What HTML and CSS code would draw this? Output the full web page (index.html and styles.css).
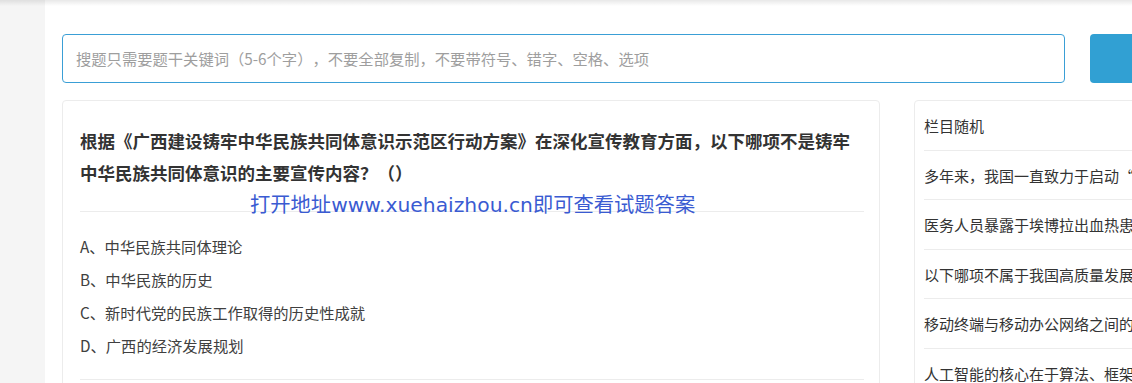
FILE: index.html
```html
<!DOCTYPE html>
<html lang="zh-CN">
<head>
<meta charset="utf-8">
<title>搜题</title>
<link rel="stylesheet" href="styles.css">
</head>
<body>
<div class="topshade"></div>
<div class="page">
  <aside class="strip"></aside>
  <main class="main">
    <div class="search">
      <input class="search-input" type="text" placeholder="搜题只需要题干关键词（5-6个字），不要全部复制，不要带符号、错字、空格、选项">
      <button class="search-btn" type="button"></button>
    </div>
    <div class="row">
      <section class="card question">
        <div class="q-title">根据《广西建设铸牢中华民族共同体意识示范区行动方案》在深化宣传教育方面，以下哪项不是铸牢中华民族共同体意识的主要宣传内容？（）</div>
        <div class="q-options">
          <p class="opt">A、中华民族共同体理论</p>
          <p class="opt">B、中华民族的历史</p>
          <p class="opt">C、新时代党的民族工作取得的历史性成就</p>
          <p class="opt">D、广西的经济发展规划</p>
        </div>
        <div class="watermark">打开地址www.xuehaizhou.cn即可查看试题答案</div>
      </section>
      <section class="card side">
        <div class="side-head">栏目随机</div>
        <ul class="side-list">
          <li>多年来，我国一直致力于启动“中国制造”</li>
          <li>医务人员暴露于埃博拉出血热患者</li>
          <li>以下哪项不属于我国高质量发展</li>
          <li>移动终端与移动办公网络之间的</li>
          <li>人工智能的核心在于算法、框架</li>
        </ul>
      </section>
    </div>
  </main>
</div>
</body>
</html>
```

FILE: styles.css
```css
html, body {
  margin: 0;
  padding: 0;
  height: 100%;
}
body {
  background: #ffffff;
  font-family: "Noto Sans CJK SC", "Noto Sans", sans-serif;
  color: #333;
  overflow: hidden;
  position: relative;
  text-spacing-trim: space-all;
}
.topshade {
  position: absolute;
  left: 0;
  top: 0;
  width: 100%;
  height: 6px;
  background: linear-gradient(to bottom, rgba(0,0,0,0.09), rgba(0,0,0,0));
  z-index: 5;
}
.page {
  display: flex;
  width: 1300px;
  min-height: 100%;
}
.strip {
  width: 45px;
  flex: 0 0 45px;
  background: #f5f5f5;
}
.main {
  flex: 1;
  background: #fff;
  padding: 34px 0 0 17px;
}
.search {
  display: flex;
  gap: 25px;
  height: 49px;
}
.search-input {
  box-sizing: border-box;
  width: 1003px;
  height: 49px;
  border: 1px solid #3a9fd6;
  border-radius: 4px;
  padding: 0 13px 2px;
  font-family: "Noto Sans CJK SC", sans-serif;
  font-size: 15.3px;
  color: #333;
  outline: none;
  background: #fff;
  text-spacing-trim: space-all;
}
.search-input::placeholder {
  color: #9e9e9e;
}
.search-btn {
  width: 110px;
  height: 49px;
  border: none;
  border-radius: 4px;
  background: #31a0d3;
}
.row {
  display: flex;
  gap: 34px;
  margin-top: 17px;
  align-items: flex-start;
}
.card {
  box-sizing: border-box;
  border: 1px solid #ececec;
  border-radius: 4px;
  background: #fff;
}
.question {
  position: relative;
  width: 818px;
  padding: 0 15px 0 17px;
  height: 400px;
}
.q-title {
  padding: 24px 0 22px;
  font-size: 17.5px;
  font-weight: 700;
  line-height: 32px;
  color: #333;
  border-bottom: 1px solid #ececec;
}
.q-options {
  padding: 18px 0 17px;
  border-bottom: 1px solid #ececec;
}
.opt {
  margin: 0;
  font-size: 15.3px;
  line-height: 33px;
  color: #404040;
}
.watermark {
  position: absolute;
  left: 187px;
  top: 89px;
  font-family: "DejaVu Sans", "Noto Sans CJK SC", sans-serif;
  font-size: 20.3px;
  line-height: 30px;
  color: #3a5bd2;
  white-space: nowrap;
}
.side {
  width: 320px;
  padding: 0 0 0 9px;
  height: 400px;
}
.side-head {
  padding: 14px 0 13px;
  font-size: 15px;
  line-height: 21.5px;
  color: #333;
  border-bottom: 1px solid #ececec;
}
.side-list {
  list-style: none;
  margin: 0;
  padding: 0;
}
.side-list li {
  padding: 14px 0 13px;
  font-size: 15px;
  line-height: 21.5px;
  color: #333;
  white-space: nowrap;
  overflow: hidden;
  border-bottom: 1px solid #ececec;
}
```
